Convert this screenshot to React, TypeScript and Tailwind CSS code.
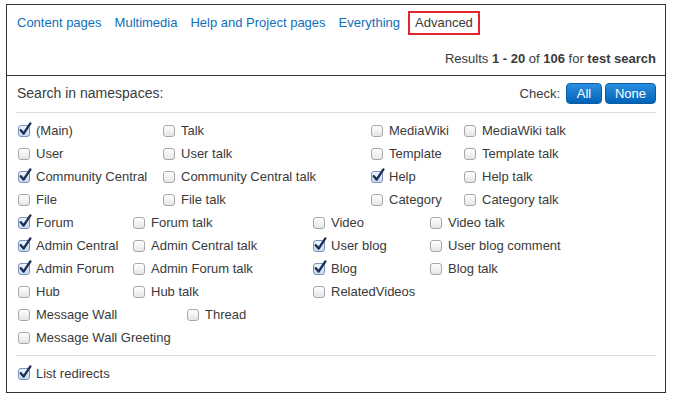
import type { ReactNode } from 'react'

type Item = [string, boolean]

const tabs = ['Content pages', 'Multimedia', 'Help and Project pages', 'Everything']

// each group is laid out as its own table, so the column widths differ per group
const groups: { cols: string; n: number; rows: Item[][] }[] = [
  {
    cols: 'grid-cols-[145px_208px_93px_1fr]',
    n: 4,
    rows: [
      [['(Main)', true], ['Talk', false], ['MediaWiki', false], ['MediaWiki talk', false]],
      [['User', false], ['User talk', false], ['Template', false], ['Template talk', false]],
      [['Community Central', true], ['Community Central talk', false], ['Help', true], ['Help talk', false]],
      [['File', false], ['File talk', false], ['Category', false], ['Category talk', false]],
    ],
  },
  {
    cols: 'grid-cols-[115px_180px_117px_1fr]',
    n: 4,
    rows: [
      [['Forum', true], ['Forum talk', false], ['Video', false], ['Video talk', false]],
      [['Admin Central', true], ['Admin Central talk', false], ['User blog', true], ['User blog comment', false]],
      [['Admin Forum', true], ['Admin Forum talk', false], ['Blog', true], ['Blog talk', false]],
      [['Hub', false], ['Hub talk', false], ['RelatedVideos', false]],
    ],
  },
  {
    cols: 'grid-cols-[169px_1fr]',
    n: 2,
    rows: [[['Message Wall', false], ['Thread', false]], [['Message Wall Greeting', false]]],
  },
]

function Checkbox({ checked }: { checked: boolean }) {
  return (
    <span className="relative ml-[2px] inline-block h-[12px] w-[12px] shrink-0">
      <span
        className={
          checked
            ? 'absolute inset-0 rounded-[3px] border border-[#7a93b8] bg-gradient-to-b from-[#eef4fc] to-[#c9dbf2]'
            : 'absolute inset-0 rounded-[3px] border border-[#a8a8a8] bg-gradient-to-b from-[#ffffff] to-[#e6e6e6]'
        }
      />
      {checked && (
        <svg className="absolute left-[1px] top-[-3px]" width="13" height="14" viewBox="0 0 13 14">
          <path
            d="M1.8 8.2 L4.6 11.6 L11.4 1.4"
            fill="none"
            stroke="#1c2f55"
            strokeWidth="2.4"
            strokeLinecap="round"
            strokeLinejoin="round"
          />
        </svg>
      )}
    </span>
  )
}

function Option({ label, checked }: { label: string; checked: boolean }) {
  return (
    <label className="flex h-[23px] items-center gap-[6px] whitespace-nowrap">
      <Checkbox checked={checked} />
      <span>{label}</span>
    </label>
  )
}

function Button({ children, className = '' }: { children: ReactNode; className?: string }) {
  return (
    <button
      className={`h-[21px] rounded-[4px] border border-[#0b5da3] bg-gradient-to-b from-[#2a8ee0] to-[#0063b8] text-[13px] leading-none text-white ${className}`}
    >
      {children}
    </button>
  )
}

export default function App() {
  return (
    <div
      className="h-[399px] w-[676px] bg-white pl-[6px] pt-[4px] text-[13px] text-[#3a3a3a]"
      style={{ fontFamily: '"Liberation Sans", Arial, Helvetica, sans-serif' }}
    >
      <div className="w-[660px] border border-[#333]">
        <div className="h-[71px] border-b border-[#333] px-[4px] pt-[6px]">
          <div className="flex items-center gap-px">
            {tabs.map((t) => (
              <a key={t} className="flex h-[24px] items-center px-[6px] text-[#0f6fba]">
                {t}
              </a>
            ))}
            <span className="ml-[1px] flex h-[24px] items-center border-2 border-[#e2262b] px-[5px]">Advanced</span>
          </div>
          <div className="mt-[14px] pr-[5px] text-right">
            Results <b>1 - 20</b> of <b>106</b> for <b>test search</b>
          </div>
        </div>

        <div className="px-[9px] pt-[7px]">
          <div className="flex h-[21px] items-center justify-between">
            <span className="pl-px text-[14px]">Search in namespaces:</span>
            <div className="flex items-center">
              <span className="mr-[6px]">Check:</span>
              <Button className="w-[36px]">All</Button>
              <Button className="ml-[3px] w-[51px]">None</Button>
            </div>
          </div>
          <div className="mt-[8px] border-t border-[#dddddd] pt-[6px] pb-[6px]">
            {groups.map((g, gi) => (
              <div key={gi} className={`grid ${g.cols}`}>
                {g.rows.map((row) =>
                  Array.from({ length: g.n }, (_, ci) =>
                    row[ci] ? (
                      <Option key={row[ci][0]} label={row[ci][0]} checked={row[ci][1]} />
                    ) : (
                      <span key={`e${gi}${ci}${row[0][0]}`} />
                    ),
                  ),
                )}
              </div>
            ))}
          </div>
          <div className="border-t border-[#dddddd] pt-[6px] pb-[7px]">
            <Option label="List redirects" checked />
          </div>
        </div>
      </div>
    </div>
  )
}
